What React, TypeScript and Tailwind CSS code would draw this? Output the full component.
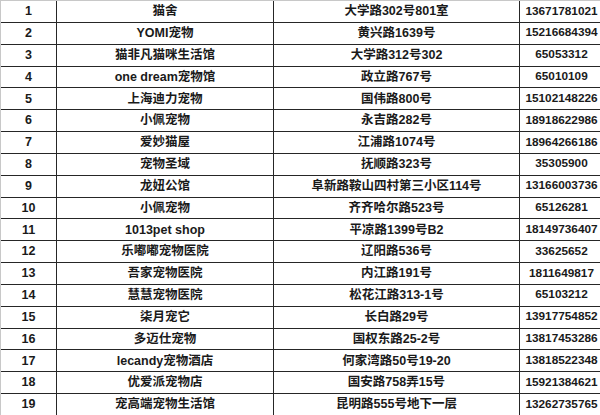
import React from "react";

const rows: [string, string, string, string][] = [
  ["1", "猫舍", "大学路302号801室", "13671781021"],
  ["2", "YOMI宠物", "黄兴路1639号", "15216684394"],
  ["3", "猫非凡猫咪生活馆", "大学路312号302", "65053312"],
  ["4", "one dream宠物馆", "政立路767号", "65010109"],
  ["5", "上海迪力宠物", "国伟路800号", "15102148226"],
  ["6", "小佩宠物", "永吉路282号", "18918622986"],
  ["7", "爱妙猫屋", "江浦路1074号", "18964266186"],
  ["8", "宠物圣域", "抚顺路323号", "35305900"],
  ["9", "龙妞公馆", "阜新路鞍山四村第三小区114号", "13166003736"],
  ["10", "小佩宠物", "齐齐哈尔路523号", "65126281"],
  ["11", "1013pet shop", "平凉路1399号B2", "18149736407"],
  ["12", "乐嘟嘟宠物医院", "辽阳路536号", "33625652"],
  ["13", "吾家宠物医院", "内江路191号", "1811649817"],
  ["14", "慧慧宠物医院", "松花江路313-1号", "65103212"],
  ["15", "柒月宠它", "长白路29号", "13917754852"],
  ["16", "多迈仕宠物", "国权东路25-2号", "13817453286"],
  ["17", "lecandy宠物酒店", "何家湾路50号19-20", "13818522348"],
  ["18", "优爱派宠物店", "国安路758弄15号", "15921384621"],
  ["19", "宠高端宠物生活馆", "昆明路555号地下一层", "13262735765"],
];

export default function App() {
  return (
    <div className="w-[600px] h-[415px] overflow-hidden bg-white">
      <div
        className="w-[606px] h-[416px] grid grid-cols-[56px_217px_246px_87px] grid-rows-[repeat(19,1fr)] border-t border-l border-t-[#c8c8c8] border-l-[#c8c8c8] text-[12.5px] font-bold text-[#1a1a1a]"
        style={{ fontFamily: '"Liberation Sans", "Noto Sans CJK SC", sans-serif' }}
      >
        {rows.map((r) =>
          r.map((c, j) => (
            <div
              key={r[0] + "-" + j}
              className={
                j === 3
                  ? "flex items-center justify-center border-r border-b border-[#262626] whitespace-nowrap leading-none text-[11.8px] pr-[3px]"
                  : "flex items-center justify-center border-r border-b border-[#262626] whitespace-nowrap leading-none"
              }
            >
              {c}
            </div>
          ))
        )}
      </div>
    </div>
  );
}
